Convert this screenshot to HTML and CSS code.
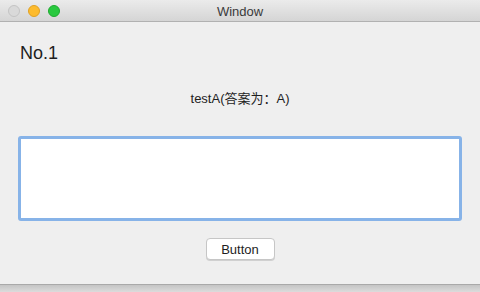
FILE: index.html
```html
<!DOCTYPE html>
<html lang="en">
<head>
    <meta charset="UTF-8">
    <title>Window</title>
    <link rel="stylesheet" href="styles.css">
</head>
<body>
    <div class="window">
        <div class="titlebar">
            <div class="lights">
                <span class="light close"></span>
                <span class="light min"></span>
                <span class="light max"></span>
            </div>
            <div class="title">Window</div>
        </div>
        <div class="content">
            <div class="number">No.1</div>
            <div class="question">testA(答案为：A)</div>
            <textarea class="answer"></textarea>
            <div class="actions">
                <button class="btn">Button</button>
            </div>
        </div>
    </div>
    <div class="shadow"></div>
</body>
</html>
```

FILE: styles.css
```css
html, body {
    margin: 0;
    padding: 0;
    height: 292px;
    overflow: hidden;
}
body {
    font-family: 'Liberation Sans', 'Noto Sans CJK SC', sans-serif;
    background: #d6d6d6;
    display: flex;
    flex-direction: column;
}
.window {
    height: 285px;
    background: #efefef;
    display: flex;
    flex-direction: column;
    border-bottom: 1px solid #a9a9a9;
    box-sizing: border-box;
}
.titlebar {
    height: 22px;
    box-sizing: border-box;
    background: linear-gradient(#ebebeb, #d5d5d5);
    border-bottom: 1px solid #b1b1b1;
    position: relative;
    display: flex;
    align-items: center;
    justify-content: center;
}
.lights {
    position: absolute;
    left: 8px;
    top: 5px;
    display: flex;
    gap: 8px;
}
.light {
    width: 12px;
    height: 12px;
    border-radius: 50%;
    box-sizing: border-box;
}
.close {
    background: #d9d9d9;
    border: 1px solid #c4c4c4;
}
.min {
    background: #fdbb2d;
    border: 1px solid #e0a123;
}
.max {
    background: #29c93f;
    border: 1px solid #1eaa2f;
}
.title {
    font-size: 13px;
    color: #3a3a3a;
    padding-top: 1px;
}
.content {
    flex: 1;
    display: flex;
    flex-direction: column;
    padding: 20px 18px 0 18px;
}
.number {
    font-size: 18px;
    color: #1e1e1e;
    padding-left: 2px;
    line-height: 22px;
}
.question {
    margin-top: 27px;
    font-size: 13px;
    color: #1e1e1e;
    text-align: center;
    line-height: 16px;
}
.answer {
    margin-top: 29px;
    height: 85px;
    box-sizing: border-box;
    border: 3px solid #87b3e8;
    border-radius: 3px;
    background: #ffffff;
    resize: none;
    outline: none;
    width: 444px;
}
.actions {
    display: flex;
    justify-content: center;
    margin-top: 17px;
}
.btn {
    font-family: 'Liberation Sans', sans-serif;
    font-size: 13px;
    color: #1e1e1e;
    background: #ffffff;
    border: 1px solid #c6c6c6;
    border-radius: 4px;
    width: 69px;
    height: 22px;
    padding: 0;
    box-shadow: 0 1px 0 #d0d0d0;
}
.shadow {
    flex: 1;
    background: linear-gradient(#c4c4c4, #dcdcdc);
}
```
